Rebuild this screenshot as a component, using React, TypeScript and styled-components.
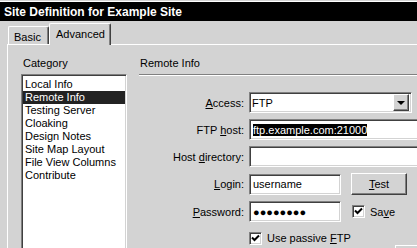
import React from 'react';
import styled, { createGlobalStyle, css } from 'styled-components';

const FACE = '#d3d3d3';

const GlobalStyle = createGlobalStyle`
  html, body {
    margin: 0;
    padding: 0;
    background: ${FACE};
    overflow: hidden;
  }
  body {
    font-family: 'Liberation Sans', Arial, sans-serif;
    font-size: 11px;
    color: #000;
  }
  * { box-sizing: border-box; }
`;

const sunken = css`
  border-style: solid;
  border-width: 1px;
  border-color: #808080 #fff #fff #808080;
  box-shadow: inset 1px 1px 0 #404040, inset -1px -1px 0 ${FACE};
`;

const raised = css`
  border-style: solid;
  border-width: 1px;
  border-color: #fff #404040 #404040 #fff;
  box-shadow: inset -1px -1px 0 #808080;
`;

const Window = styled.div`
  width: 417px;
  height: 248px;
  padding-top: 1px;
  overflow: hidden;
`;

const TitleBar = styled.div`
  height: 20px;
  border-top: 1px solid #fff;
  background: #000;
  color: #fff;
  font-weight: bold;
  font-size: 12px;
  padding-left: 4px;
  display: flex;
  align-items: center;
`;

const Body = styled.div`
  padding-left: 7px;
`;

const TabRow = styled.div`
  height: 23px;
  display: flex;
  align-items: flex-end;
`;

const Tab = styled.div<{ $active?: boolean }>`
  position: relative;
  display: flex;
  align-items: center;
  flex-shrink: 0;
  background: ${FACE};
  border-top: 1px solid #fff;
  border-left: 1px solid #fff;
  border-right: 1px solid #404040;
  box-shadow: inset -1px 0 0 #808080;
  border-radius: 2px 2px 0 0;
  ${({ $active }) =>
    $active
      ? css`
          width: 62px;
          height: 22px;
          margin-bottom: -1px;
          padding: 0 0 1px 6px;
          z-index: 1;
        `
      : css`
          width: 41px;
          height: 18px;
          margin-left: 1px;
          padding: 2px 0 0 5px;
        `}
`;

const Panel = styled.div`
  border-top: 1px solid #fff;
  border-left: 1px solid #fff;
  padding-top: 12px;
  display: flex;
`;

const LeftCol = styled.div`
  padding-left: 13px;
  width: 119px;
  flex-shrink: 0;
`;

const Caption = styled.div`
  line-height: 13px;
  padding-left: 2px;
`;

const ListBox = styled.div`
  ${sunken};
  margin-top: 4px;
  width: 106px;
  height: 200px;
  background: #fff;
  padding: 3px 1px 0;
`;

const ListItem = styled.div<{ $selected?: boolean }>`
  line-height: 13px;
  height: 13px;
  padding-left: 2px;
  white-space: nowrap;
  background: ${({ $selected }) => ($selected ? '#222' : 'transparent')};
  color: ${({ $selected }) => ($selected ? '#fff' : '#000')};
`;

const RightCol = styled.div`
  margin-left: 12px;
  flex: 1;
  min-width: 0;
`;

const Heading = styled.div`
  line-height: 13px;
  padding-left: 1px;
`;

const Separator = styled.div`
  margin-top: 4px;
  border-top: 1px solid #808080;
  border-bottom: 1px solid #fff;
`;

const Form = styled.div`
  margin-top: 16px;
`;

const Row = styled.div<{ $h: number; $mt?: number }>`
  display: flex;
  align-items: center;
  height: ${({ $h }) => $h}px;
  margin-top: ${({ $mt }) => $mt ?? 6}px;
  white-space: nowrap;
`;

const Label = styled.div`
  width: 105px;
  flex-shrink: 0;
  margin-right: 5px;
  text-align: right;
`;

const Indent = styled.div`
  width: 110px;
  flex-shrink: 0;
`;

const Field = styled.div<{ $w: number }>`
  ${sunken};
  width: ${({ $w }) => $w}px;
  flex-shrink: 0;
  height: 21px;
  background: #fff;
  padding-left: 3px;
  display: flex;
  align-items: center;
  white-space: nowrap;
`;

const Selected = styled.span`
  background: #000;
  color: #fff;
`;

const SelectBox = styled(Field)`
  padding-left: 2px;
  padding-right: 2px;
  justify-content: space-between;
`;

const DropButton = styled.div`
  ${raised};
  width: 16px;
  height: 17px;
  background: ${FACE};
  display: flex;
  align-items: center;
  justify-content: center;
`;

const Arrow = styled.div`
  width: 0;
  height: 0;
  border-left: 4px solid transparent;
  border-right: 4px solid transparent;
  border-top: 4px solid #000;
  margin-top: 1px;
`;

const Button = styled.div<{ $w: number; $h: number; $ml?: number }>`
  ${raised};
  width: ${({ $w }) => $w}px;
  height: ${({ $h }) => $h}px;
  margin-left: ${({ $ml }) => ($ml === undefined ? 'auto' : `${$ml}px`)};
  background: ${FACE};
  display: flex;
  align-items: center;
  justify-content: center;
  flex-shrink: 0;
`;

const CheckBox = styled.div`
  ${sunken};
  width: 13px;
  height: 13px;
  background: #fff;
  flex-shrink: 0;
  display: flex;
  align-items: center;
  justify-content: center;
`;

const CheckText = styled.span`
  margin-left: 5px;
`;

const SaveGroup = styled.div`
  margin-left: 11px;
  display: flex;
  align-items: center;
`;

const FirewallRow = styled.div`
  width: 250px;
  flex-shrink: 0;
  display: flex;
  align-items: flex-start;
  height: 23px;
`;

const Check = () => (
  <svg width="9" height="9" viewBox="0 0 9 9">
    <path d="M1 3.5 L3.5 6 L8 1.5" stroke="#000" strokeWidth="2" fill="none" />
  </svg>
);

const categories = [
  'Local Info',
  'Remote Info',
  'Testing Server',
  'Cloaking',
  'Design Notes',
  'Site Map Layout',
  'File View Columns',
  'Contribute',
];

export default function App() {
  return (
    <>
      <GlobalStyle />
      <Window>
        <TitleBar>Site Definition for Example Site</TitleBar>
        <Body>
          <TabRow>
            <Tab>Basic</Tab>
            <Tab $active>Advanced</Tab>
          </TabRow>
          <Panel>
            <LeftCol>
              <Caption>Category</Caption>
              <ListBox>
                {categories.map((c) => (
                  <ListItem key={c} $selected={c === 'Remote Info'}>
                    {c}
                  </ListItem>
                ))}
              </ListBox>
            </LeftCol>
            <RightCol>
              <Heading>Remote Info</Heading>
              <Separator />
              <Form>
                <Row $h={21} $mt={0}>
                  <Label>
                    <u>A</u>ccess:
                  </Label>
                  <SelectBox $w={163}>
                    FTP
                    <DropButton>
                      <Arrow />
                    </DropButton>
                  </SelectBox>
                </Row>
                <Row $h={21}>
                  <Label>
                    FTP <u>h</u>ost:
                  </Label>
                  <Field $w={200}>
                    <Selected>ftp.example.com:21000</Selected>
                  </Field>
                </Row>
                <Row $h={21}>
                  <Label>
                    Host <u>d</u>irectory:
                  </Label>
                  <Field $w={200} />
                </Row>
                <Row $h={22}>
                  <Label>
                    <u>L</u>ogin:
                  </Label>
                  <Field $w={92}>username</Field>
                  <Button $w={56} $h={22} $ml={10}>
                    <span>
                      <u>T</u>est
                    </span>
                  </Button>
                </Row>
                <Row $h={21}>
                  <Label>
                    <u>P</u>assword:
                  </Label>
                  <Field $w={92}>●●●●●●●●</Field>
                  <SaveGroup>
                    <CheckBox>
                      <Check />
                    </CheckBox>
                    <CheckText>
                      Sa<u>v</u>e
                    </CheckText>
                  </SaveGroup>
                </Row>
                <Row $h={14} $mt={9}>
                  <Indent />
                  <CheckBox>
                    <Check />
                  </CheckBox>
                  <CheckText>
                    Use passive <u>F</u>TP
                  </CheckText>
                </Row>
                <Row $h={23} $mt={0}>
                  <Indent />
                  <FirewallRow>
                    <Button $w={104} $h={23} />
                  </FirewallRow>
                </Row>
              </Form>
            </RightCol>
          </Panel>
        </Body>
      </Window>
    </>
  );
}
